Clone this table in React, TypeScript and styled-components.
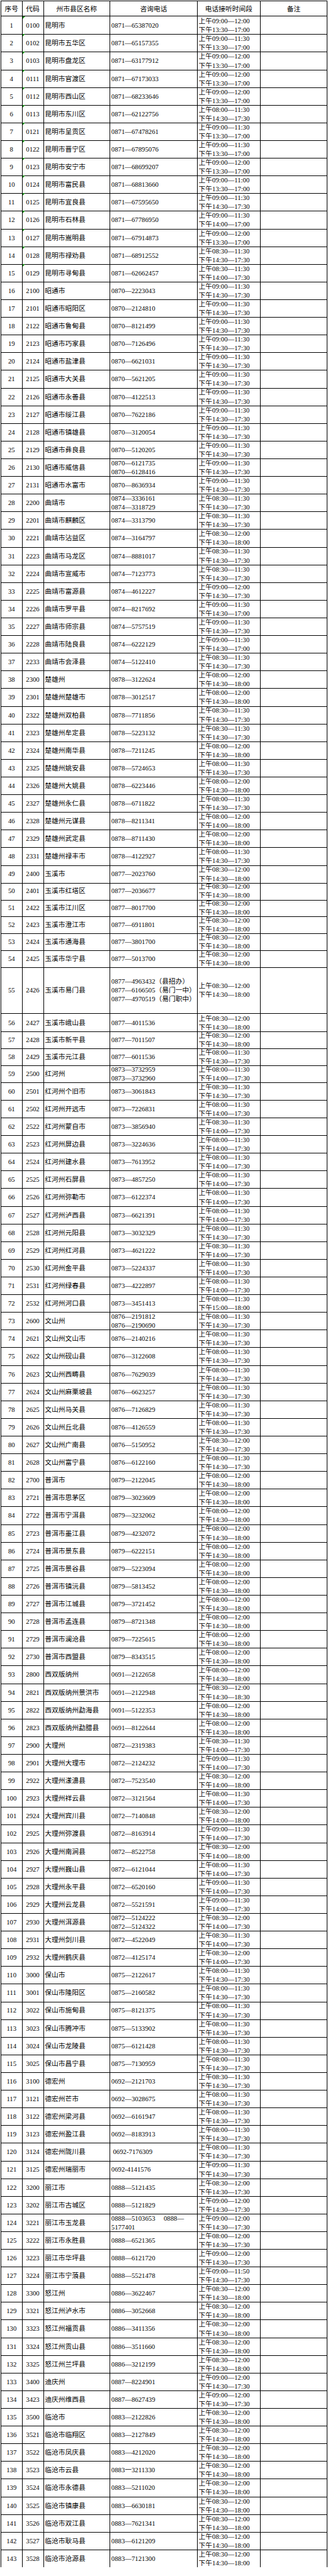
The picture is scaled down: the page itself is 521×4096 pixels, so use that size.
import React from 'react';
import styled, { createGlobalStyle } from 'styled-components';

type Entry = [string, string, string[], string, string];

const D = '—';
const GREEN_ROWS = 15;
const SHORT_ROWS = [49, 50, 51, 52, 53, 54, 56, 57, 58];
const TALL_ROW = 55;

const p = (area: string, nums: string) => nums.split(',').map(n => `${area}${D}${n}`);

const rows: Entry[] = [
  ['0100', '昆明市', p('0871', '65387020'), '09:00—12:00', '13:30—17:00'],
  ['0102', '昆明市五华区', p('0871', '65157355'), '09:00—11:30', '13:30—17:00'],
  ['0103', '昆明市盘龙区', p('0871', '63177912'), '09:00—12:00', '13:30—17:00'],
  ['0111', '昆明市官渡区', p('0871', '67173033'), '09:00—12:00', '13:30—17:00'],
  ['0112', '昆明市西山区', p('0871', '68233646'), '09:00—12:00', '13:30—17:00'],
  ['0113', '昆明市东川区', p('0871', '62122756'), '08:00—11:30', '14:30—17:30'],
  ['0121', '昆明市呈贡区', p('0871', '67478261'), '09:00—11:30', '13:30—17:00'],
  ['0122', '昆明市晋宁区', p('0871', '67895076'), '09:00—11:30', '13:30—17:00'],
  ['0123', '昆明市安宁市', p('0871', '68699207'), '09:00—12:00', '13:30—17:00'],
  ['0124', '昆明市富民县', p('0871', '68813660'), '09:00—11:00', '13:30—17:00'],
  ['0125', '昆明市宜良县', p('0871', '67595650'), '09:00—11:30', '14:30—17:30'],
  ['0126', '昆明市石林县', p('0871', '67786950'), '09:00—11:30', '14:00—17:00'],
  ['0127', '昆明市嵩明县', p('0871', '67914873'), '09:00—12:00', '13:30—17:00'],
  ['0128', '昆明市禄劝县', p('0871', '68912552'), '08:30—11:30', '14:30—17:30'],
  ['0129', '昆明市寻甸县', p('0871', '62662457'), '08:30—11:30', '14:00—17:30'],
  ['2100', '昭通市', p('0870', '2223043'), '09:00—11:30', '14:30—17:30'],
  ['2101', '昭通市昭阳区', p('0870', '2124810'), '09:00—11:30', '14:30—17:30'],
  ['2122', '昭通市鲁甸县', p('0870', '8121499'), '09:00—11:30', '14:30—17:30'],
  ['2123', '昭通市巧家县', p('0870', '7126496'), '09:00—11:30', '14:30—17:30'],
  ['2124', '昭通市盐津县', p('0870', '6621031'), '09:00—11:30', '14:30—17:30'],
  ['2125', '昭通市大关县', p('0870', '5621205'), '09:00—11:30', '14:30—17:30'],
  ['2126', '昭通市永善县', p('0870', '4122513'), '09:00—11:30', '14:30—17:30'],
  ['2127', '昭通市绥江县', p('0870', '7622186'), '09:00—11:30', '14:30—17:30'],
  ['2128', '昭通市镇雄县', p('0870', '3120054'), '09:00—11:30', '14:30—17:30'],
  ['2129', '昭通市彝良县', p('0870', '5120205'), '09:00—11:30', '14:30—17:30'],
  ['2130', '昭通市威信县', p('0870', '6121735,6128416'), '09:00—11:30', '14:30—17:30'],
  ['2131', '昭通市水富市', p('0870', '8636934'), '09:00—11:30', '14:30—17:30'],
  ['2200', '曲靖市', p('0874', '3336161,3318729'), '08:30—11:30', '14:30—17:30'],
  ['2201', '曲靖市麒麟区', p('0874', '3313790'), '08:30—11:30', '14:30—17:30'],
  ['2221', '曲靖市沾益区', p('0874', '3164797'), '08:30—12:00', '14:30—18:00'],
  ['2223', '曲靖市马龙区', p('0874', '8881017'), '08:30—11:30', '14:30—17:30'],
  ['2224', '曲靖市宣威市', p('0874', '7123773'), '08:30—11:30', '14:30—17:30'],
  ['2225', '曲靖市富源县', p('0874', '4612227'), '09:00—12:00', '14:30—17:30'],
  ['2226', '曲靖市罗平县', p('0874', '8217692'), '09:00—11:30', '14:30—17:00'],
  ['2227', '曲靖市师宗县', p('0874', '5757519'), '09:00—11:30', '14:30—17:30'],
  ['2228', '曲靖市陆良县', p('0874', '6222129'), '09:00—11:30', '14:30—17:00'],
  ['2233', '曲靖市会泽县', p('0874', '5122410'), '08:30—11:30', '14:30—17:30'],
  ['2300', '楚雄州', p('0878', '3122624'), '08:00—12:00', '14:30—18:00'],
  ['2301', '楚雄州楚雄市', p('0878', '3012517'), '08:00—12:00', '14:30—18:00'],
  ['2322', '楚雄州双柏县', p('0878', '7711856'), '08:30—11:30', '14:30—17:30'],
  ['2323', '楚雄州牟定县', p('0878', '5223132'), '08:30—11:30', '14:30—17:30'],
  ['2324', '楚雄州南华县', p('0878', '7211245'), '08:00—12:00', '14:30—18:00'],
  ['2325', '楚雄州姚安县', p('0878', '5724653'), '08:00—11:30', '14:30—17:30'],
  ['2326', '楚雄州大姚县', p('0878', '6223446'), '08:00—12:00', '14:30—18:00'],
  ['2327', '楚雄州永仁县', p('0878', '6711822'), '08:00—11:30', '14:30—17:30'],
  ['2328', '楚雄州元谋县', p('0878', '8211341'), '08:00—12:00', '14:00—18:00'],
  ['2329', '楚雄州武定县', p('0878', '8711430'), '08:00—12:00', '14:30—18:00'],
  ['2331', '楚雄州禄丰市', p('0878', '4122927'), '08:00—11:30', '14:30—17:30'],
  ['2400', '玉溪市', p('0877', '2023760'), '08:30—12:00', '14:30—18:00'],
  ['2401', '玉溪市红塔区', p('0877', '2036677'), '08:30—12:00', '14:30—18:00'],
  ['2422', '玉溪市江川区', p('0877', '8017700'), '08:30—12:00', '14:30—18:00'],
  ['2423', '玉溪市澄江市', p('0877', '6911801'), '08:30—12:00', '14:30—18:00'],
  ['2424', '玉溪市通海县', p('0877', '3801700'), '08:30—12:00', '14:30—18:00'],
  ['2425', '玉溪市华宁县', p('0877', '5013700'), '08:30—12:00', '14:30—18:00'],
  ['2426', '玉溪市易门县', [`0877${D}4963432（县招办）`, `0877${D}6166505（易门一中）`, `0877${D}4970519（易门职中）`], '08:30—12:00', '14:30—18:00'],
  ['2427', '玉溪市峨山县', p('0877', '4011536'), '08:30—12:00', '14:30—18:00'],
  ['2428', '玉溪市新平县', p('0877', '7011507'), '08:30—12:00', '14:30—18:00'],
  ['2429', '玉溪市元江县', p('0877', '6011536'), '08:00—11:30', '14:30—17:30'],
  ['2500', '红河州', p('0873', '3732959,3732960'), '08:00—11:30', '14:00—17:30'],
  ['2501', '红河州个旧市', p('0873', '3061843'), '08:30—11:30', '14:30—17:30'],
  ['2502', '红河州开远市', p('0873', '7226831'), '08:00—11:30', '14:00—17:30'],
  ['2522', '红河州蒙自市', p('0873', '3856940'), '08:30—11:30', '14:00—17:30'],
  ['2523', '红河州屏边县', p('0873', '3224636'), '08:00—11:30', '14:00—17:30'],
  ['2524', '红河州建水县', p('0873', '7613952'), '08:00—11:30', '14:00—17:30'],
  ['2525', '红河州石屏县', p('0873', '4857250'), '08:00—11:30', '14:00—17:30'],
  ['2526', '红河州弥勒市', p('0873', '6122374'), '08:00—11:30', '14:00—17:30'],
  ['2527', '红河州泸西县', p('0873', '6621391'), '08:00—11:30', '14:00—17:30'],
  ['2528', '红河州元阳县', p('0873', '3032329'), '08:00—11:30', '14:30—17:30'],
  ['2529', '红河州红河县', p('0873', '4621222'), '08:30—11:30', '14:00—17:30'],
  ['2530', '红河州金平县', p('0873', '5224337'), '08:00—11:30', '14:00—17:30'],
  ['2531', '红河州绿春县', p('0873', '4222897'), '08:00—11:30', '14:00—17:30'],
  ['2532', '红河州河口县', p('0873', '3451413'), '08:00—11:30', '15:00—18:00'],
  ['2600', '文山州', p('0876', '2191812,2190690'), '08:00—11:30', '14:30—17:30'],
  ['2621', '文山州文山市', p('0876', '2140216'), '08:00—11:30', '14:30—17:30'],
  ['2622', '文山州砚山县', p('0876', '3122608'), '08:00—11:30', '14:30—17:30'],
  ['2623', '文山州西畴县', p('0876', '7629039'), '08:00—11:30', '14:30—17:30'],
  ['2624', '文山州麻栗坡县', p('0876', '6623257'), '08:00—11:30', '14:30—17:30'],
  ['2625', '文山州马关县', p('0876', '7126829'), '08:00—11:30', '14:30—17:30'],
  ['2626', '文山州丘北县', p('0876', '4126559'), '08:00—11:30', '14:30—17:30'],
  ['2627', '文山州广南县', p('0876', '5150952'), '08:30—12:00', '14:30—17:30'],
  ['2628', '文山州富宁县', p('0876', '6122160'), '08:00—11:30', '14:30—17:30'],
  ['2700', '普洱市', p('0879', '2122045'), '08:00—12:00', '14:30—18:00'],
  ['2721', '普洱市思茅区', p('0879', '3023609'), '08:00—12:00', '14:30—18:00'],
  ['2722', '普洱市宁洱县', p('0879', '3232062'), '08:00—12:00', '14:30—18:00'],
  ['2723', '普洱市墨江县', p('0879', '4232072'), '08:00—12:00', '14:30—18:00'],
  ['2724', '普洱市景东县', p('0879', '6222151'), '08:00—12:00', '14:30—18:00'],
  ['2725', '普洱市景谷县', p('0879', '5223094'), '08:00—12:00', '14:30—18:00'],
  ['2726', '普洱市镇沅县', p('0879', '5813452'), '08:00—12:00', '14:30—18:00'],
  ['2727', '普洱市江城县', p('0879', '3721452'), '08:00—12:00', '14:30—18:00'],
  ['2728', '普洱市孟连县', p('0879', '8721348'), '08:00—12:00', '14:30—18:00'],
  ['2729', '普洱市澜沧县', p('0879', '7225615'), '08:00—12:00', '14:30—18:00'],
  ['2730', '普洱市西盟县', p('0879', '8343515'), '08:00—12:00', '14:30—18:00'],
  ['2800', '西双版纳州', p('0691', '2122658'), '08:00—12:00', '14:30—18:00'],
  ['2821', '西双版纳州景洪市', p('0691', '2122948'), '08:30—12:00', '14:30—18:30'],
  ['2822', '西双版纳州勐海县', p('0691', '5122353'), '08:00—12:00', '14:30—18:00'],
  ['2823', '西双版纳州勐腊县', p('0691', '8122644'), '08:00—12:00', '14:30—18:00'],
  ['2900', '大理州', p('0872', '2319383'), '08:30—11:30', '14:00—17:30'],
  ['2901', '大理州大理市', p('0872', '2124232'), '09:00—11:30', '14:00—17:30'],
  ['2922', '大理州漾濞县', p('0872', '7523540'), '08:30—12:00', '14:00—18:00'],
  ['2923', '大理州祥云县', p('0872', '3121564'), '08:00—11:30', '14:00—17:30'],
  ['2924', '大理州宾川县', p('0872', '7140848'), '08:30—12:00', '14:00—18:00'],
  ['2925', '大理州弥渡县', p('0872', '8163914'), '09:00—11:30', '14:00—17:30'],
  ['2926', '大理州南涧县', p('0872', '8522758'), '08:30—12:00', '14:00—18:00'],
  ['2927', '大理州巍山县', p('0872', '6121044'), '08:00—11:30', '14:00—17:30'],
  ['2928', '大理州永平县', p('0872', '6520160'), '09:00—11:30', '14:00—17:30'],
  ['2929', '大理州云龙县', p('0872', '5521591'), '09:00—11:30', '14:00—17:30'],
  ['2930', '大理州洱源县', p('0872', '5124222,5124322'), '08:30—12:00', '14:00—17:30'],
  ['2931', '大理州剑川县', p('0872', '4522049'), '08:30—11:30', '14:00—17:30'],
  ['2932', '大理州鹤庆县', p('0872', '4125174'), '08:30—12:00', '14:00—17:30'],
  ['3000', '保山市', p('0875', '2122617'), '08:00—11:30', '14:30—17:30'],
  ['3001', '保山市隆阳区', p('0875', '2160582'), '08:00—11:30', '14:30—17:30'],
  ['3022', '保山市施甸县', p('0875', '8121375'), '08:00—11:30', '14:30—17:30'],
  ['3023', '保山市腾冲市', p('0875', '5133902'), '08:00—11:30', '14:30—17:30'],
  ['3024', '保山市龙陵县', p('0875', '6121428'), '08:00—11:30', '14:30—17:30'],
  ['3025', '保山市昌宁县', p('0875', '7130959'), '08:00—11:30', '14:30—17:30'],
  ['3100', '德宏州', p('0692', '2121703'), '08:30—11:30', '14:30—17:30'],
  ['3121', '德宏州芒市', p('0692', '3028675'), '08:00—11:30', '14:30—17:30'],
  ['3122', '德宏州梁河县', p('0692', '6161947'), '08:00—11:30', '14:30—17:30'],
  ['3123', '德宏州盈江县', p('0692', '8183913'), '08:00—11:30', '14:30—17:30'],
  ['3124', '德宏州陇川县', ['\u00a00692-7176309'], '08:00—11:30', '14:30—17:30'],
  ['3125', '德宏州瑞丽市', ['0692-4141576'], '09:00—11:30', '14:30—17:30'],
  ['3200', '丽江市', p('0888', '5121435'), '08:30—12:00', '14:30—17:30'],
  ['3202', '丽江市古城区', p('0888', '5121829'), '09:00—12:00', '14:30—17:30'],
  ['3221', '丽江市玉龙县', [`0888${D}5103653\u3000\u00a00888${D}`, '5177401'], '09:00—12:00', '14:30—17:30'],
  ['3222', '丽江市永胜县', p('0888', '6521365'), '08:00—12:00', '14:30—17:30'],
  ['3223', '丽江市华坪县', p('0888', '6121720'), '09:00—12:00', '14:30—17:30'],
  ['3224', '丽江市宁蒗县', p('0888', '5521478'), '09:00—11:50', '14:30—17:30'],
  ['3300', '怒江州', p('0886', '3622467'), '08:30—12:00', '14:30—18:00'],
  ['3321', '怒江州泸水市', p('0886', '3052668'), '08:30—12:00', '14:30—18:00'],
  ['3323', '怒江州福贡县', p('0886', '3411356'), '08:30—12:00', '14:30—18:00'],
  ['3324', '怒江州贡山县', p('0886', '3511660'), '08:30—12:00', '14:30—18:00'],
  ['3325', '怒江州兰坪县', p('0886', '3212199'), '08:30—12:00', '14:30—18:00'],
  ['3400', '迪庆州', p('0887', '8224901'), '09:00—12:00', '14:30—17:30'],
  ['3423', '迪庆州维西县', p('0887', '8627439'), '09:00—12:00', '14:30—17:30'],
  ['3500', '临沧市', p('0883', '2122826'), '08:30—12:00', '14:30—18:00'],
  ['3521', '临沧市临翔区', p('0883', '2127849'), '08:30—12:00', '14:30—18:00'],
  ['3522', '临沧市凤庆县', p('0883', '4212020'), '08:30—12:00', '14:30—18:00'],
  ['3523', '临沧市云县', ['0883一3211330'], '08:30—12:00', '14:30—18:00'],
  ['3524', '临沧市永德县', p('0883', '5211020'), '08:30—12:00', '14:30—18:00'],
  ['3525', '临沧市镇康县', p('0883', '6630181'), '08:30—12:00', '14:30—18:00'],
  ['3526', '临沧市双江县', p('0883', '7621341'), '08:30—12:00', '14:30—18:00'],
  ['3527', '临沧市耿马县', p('0883', '6121209'), '08:30—12:00', '14:30—18:00'],
  ['3528', '临沧市沧源县', p('0883', '7121300'), '08:30—12:00', '14:30—18:00'],
];

const rowHeight = (n: number) => {
  if (n === TALL_ROW) return 75.2;
  if (SHORT_ROWS.includes(n)) return 26.9;
  return 28.12;
};

const GlobalStyle = createGlobalStyle`
  html, body {
    margin: 0;
    padding: 0;
    background: #ffffff;
  }
  body {
    font-family: "Liberation Serif", "Noto Sans CJK SC", serif;
    font-size: 10.74px;
    color: #000000;
  }
`;

const Sheet = styled.div`
  margin: 1px 0 0 1px;
  width: max-content;
  border-top: 1px solid #000;
  border-left: 1px solid #000;
`;

const Row = styled.div<{ $h: number }>`
  display: grid;
  grid-template-columns: 33.5px 34px 105.5px 139px 99.7px 106.8px;
  height: ${p => p.$h}px;
`;

const Cell = styled.div<{ $center?: boolean; $pad?: number }>`
  position: relative;
  box-sizing: border-box;
  display: flex;
  flex-direction: column;
  justify-content: center;
  align-items: ${p => (p.$center ? 'center' : 'flex-start')};
  padding-left: ${p => p.$pad ?? 0}px;
  border-right: 1px solid #000;
  border-bottom: 1px solid #000;
  line-height: 14.1px;
  white-space: nowrap;
`;

const Line = styled.span`
  display: block;
`;

const Marker = styled.span`
  position: absolute;
  top: 0;
  left: 0;
  width: 0;
  height: 0;
  border-top: 4px solid #138a13;
  border-right: 4px solid transparent;
`;

const HEADERS = ['序号', '代码', '州市县区名称', '咨询电话', '电话接听时间段', '备注'];

export default function App() {
  return (
    <>
      <GlobalStyle />
      <Sheet>
        <Row $h={24.2}>
          {HEADERS.map(h => (
            <Cell key={h} $center>{h}</Cell>
          ))}
        </Row>
        {rows.map(([code, name, phones, am, pm], i) => {
          const n = i + 1;
          return (
            <Row key={code} $h={rowHeight(n)}>
              <Cell $center>{n}</Cell>
              <Cell $center>
                {n <= GREEN_ROWS && <Marker />}
                {code}
              </Cell>
              <Cell $pad={1.8}>{name}</Cell>
              <Cell $pad={1.8}>
                {phones.map(ph => (
                  <Line key={ph}>{ph}</Line>
                ))}
              </Cell>
              <Cell $pad={1.6}>
                <Line>上午{am}</Line>
                <Line>下午{pm}</Line>
              </Cell>
              <Cell />
            </Row>
          );
        })}
      </Sheet>
    </>
  );
}
